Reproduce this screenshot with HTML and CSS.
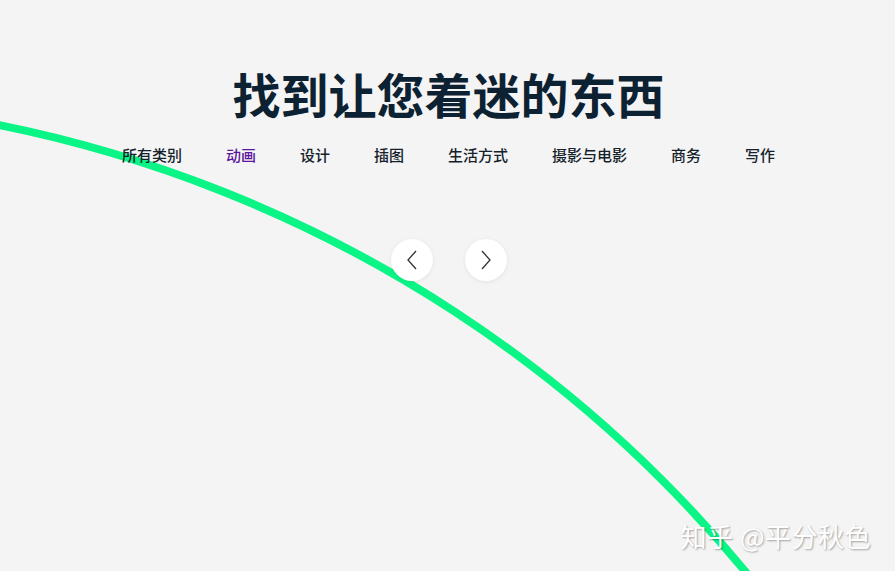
FILE: index.html
```html
<!DOCTYPE html>
<html lang="zh">
<head>
<meta charset="utf-8">
<link rel="stylesheet" href="styles.css">
</head>
<body>
<svg class="arc" width="895" height="571" viewBox="0 0 895 571" aria-hidden="true">
  <circle cx="-256" cy="1399" r="1299" fill="none" stroke="#0af586" stroke-width="8"/>
</svg>
<main class="page">
  <h1 class="title">找到让您着迷的东西</h1>
  <nav class="tabs">
    <a class="tab">所有类别</a>
    <a class="tab active">动画</a>
    <a class="tab">设计</a>
    <a class="tab">插图</a>
    <a class="tab">生活方式</a>
    <a class="tab">摄影与电影</a>
    <a class="tab">商务</a>
    <a class="tab">写作</a>
  </nav>
  <div class="controls">
    <button class="circle-btn" aria-label="上一个">
      <svg width="14" height="22" viewBox="0 0 14 22"><path d="M11 2 L3 11 L11 20" fill="none" stroke="#333" stroke-width="1.3"/></svg>
    </button>
    <button class="circle-btn" aria-label="下一个">
      <svg width="14" height="22" viewBox="0 0 14 22"><path d="M3 2 L11 11 L3 20" fill="none" stroke="#333" stroke-width="1.3"/></svg>
    </button>
  </div>
</main>
<div class="watermark">知乎 @平分秋色</div>
</body>
</html>
```

FILE: styles.css
```css
html, body {
  margin: 0;
  padding: 0;
}
body {
  width: 895px;
  height: 571px;
  overflow: hidden;
  background: #f4f4f4;
  font-family: "Noto Sans CJK SC", "Noto Sans", sans-serif;
  position: relative;
}
.arc {
  position: absolute;
  left: 0;
  top: 0;
  z-index: 0;
}
.page {
  position: relative;
  z-index: 1;
  display: flex;
  flex-direction: column;
  align-items: center;
  padding-top: 65px;
}
.title {
  margin: 0;
  font-size: 48px;
  line-height: 56px;
  font-weight: 700;
  color: #0c2232;
  padding-left: 2px;
}
.tabs {
  display: flex;
  gap: 44px;
  margin-top: 23px;
  padding-left: 2px;
}
.tab {
  font-size: 15px;
  line-height: 22px;
  font-weight: 500;
  color: #15222b;
  cursor: pointer;
}
.tab.active {
  color: #5a169e;
}
.controls {
  display: flex;
  gap: 32px;
  margin-top: 73px;
  padding-left: 2px;
}
.circle-btn {
  width: 42px;
  height: 42px;
  border-radius: 50%;
  border: none;
  background: #ffffff;
  box-shadow: 0 1px 4px rgba(0,0,0,0.08);
  display: flex;
  align-items: center;
  justify-content: center;
  padding: 0;
  cursor: pointer;
}
.watermark {
  position: absolute;
  right: 24px;
  bottom: 18px;
  z-index: 2;
  font-size: 26px;
  line-height: 34px;
  color: #ffffff;
  text-shadow: 1px 1px 2px rgba(0,0,0,0.35);
  letter-spacing: 0.5px;
}
```
